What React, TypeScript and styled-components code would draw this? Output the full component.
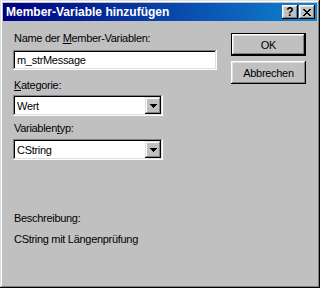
import React from "react";
import styled, { createGlobalStyle } from "styled-components";

const face = "#c0c0c0";
const font = `"Liberation Sans", Arial, sans-serif`;

const GlobalStyle = createGlobalStyle`
    html, body {
        margin: 0;
        padding: 0;
        background: ${face};
    }
    body {
        font-family: ${font};
        font-size: 11px;
        letter-spacing: -0.3px;
        color: #000;
    }
`;

const Window = styled.div`
    width: 320px;
    height: 288px;
    box-sizing: border-box;
    padding: 3px;
    background: ${face};
    box-shadow: inset -1px -1px #000, inset 1px 1px #dfdfdf,
        inset -2px -2px #808080, inset 2px 2px #fff;
    display: flex;
    flex-direction: column;
`;

const TitleBar = styled.div`
    height: 18px;
    display: flex;
    align-items: center;
    padding: 0 2px 0 3px;
    background: linear-gradient(to right, #000080, #1084d0);
    color: #fff;
    font-weight: bold;
    font-size: 12px;
    letter-spacing: 0;
`;

const TitleText = styled.div`
    flex: 1;
    white-space: nowrap;
`;

const TitleButtons = styled.div`
    display: flex;
    gap: 1px;
`;

const TitleButton = styled.div`
    width: 16px;
    height: 14px;
    box-sizing: border-box;
    background: ${face};
    box-shadow: inset -1px -1px #000, inset 1px 1px #fff,
        inset -2px -2px #808080, inset 2px 2px #dfdfdf;
    color: #000;
    display: flex;
    align-items: center;
    justify-content: center;
    font-size: 12px;
    font-weight: bold;
    line-height: 1;
`;

const Body = styled.div`
    flex: 1;
    display: flex;
    padding: 11px 11px 0 10px;
`;

const LeftColumn = styled.div`
    width: 204px;
    display: flex;
    flex-direction: column;
`;

const RightColumn = styled.div`
    margin-left: 14px;
    padding-top: 1px;
    display: flex;
    flex-direction: column;
    gap: 5px;
`;

const Label = styled.div<{ $top: number }>`
    margin-top: ${p => p.$top}px;
    line-height: 13px;
    padding-left: 1px;
    white-space: nowrap;
`;

const Sunken = styled.div<{ $width: number; $height: number; $top: number }>`
    width: ${p => p.$width}px;
    height: ${p => p.$height}px;
    margin-top: ${p => p.$top}px;
    box-sizing: border-box;
    background: #fff;
    box-shadow: inset -1px -1px #fff, inset 1px 1px #808080,
        inset -2px -2px #dfdfdf, inset 2px 2px #000;
    display: flex;
    align-items: center;
    padding: 2px 2px 2px 4px;
`;

const FieldText = styled.div`
    flex: 1;
    white-space: nowrap;
`;

const DropButton = styled.div`
    width: 16px;
    height: 17px;
    box-sizing: border-box;
    background: ${face};
    box-shadow: inset -1px -1px #000, inset 1px 1px #dfdfdf,
        inset -2px -2px #808080, inset 2px 2px #fff;
    display: flex;
    align-items: center;
    justify-content: center;
`;

const Button = styled.div<{ $default?: boolean }>`
    width: 75px;
    height: 23px;
    box-sizing: border-box;
    background: ${face};
    display: flex;
    align-items: center;
    justify-content: center;
    box-shadow: ${p =>
        p.$default
            ? "inset 0 0 0 1px #000, inset -2px -2px #000, inset 2px 2px #fff, inset -3px -3px #808080, inset 3px 3px #dfdfdf"
            : "inset -1px -1px #000, inset 1px 1px #fff, inset -2px -2px #808080, inset 2px 2px #dfdfdf"};
`;

const Arrow = () => (
    <svg width="7" height="4" viewBox="0 0 7 4" shapeRendering="crispEdges">
        <path d="M0 0h7v1H0zM1 1h5v1H1zM2 2h3v1H2zM3 3h1v1H3z" fill="#000" />
    </svg>
);

const CloseGlyph = () => (
    <svg width="8" height="7" viewBox="0 0 8 7" shapeRendering="crispEdges">
        <path
            d="M0 0h2v1H0zM6 0h2v1H6zM1 1h2v1H1zM5 1h2v1H5zM2 2h4v1H2zM3 3h2v1H3zM2 4h4v1H2zM1 5h2v1H1zM5 5h2v1H5zM0 6h2v1H0zM6 6h2v1H6z"
            fill="#000"
        />
    </svg>
);

const Combo = ({ value, top }: { value: string; top: number }) => (
    <Sunken $width={150} $height={21} $top={top}>
        <FieldText>{value}</FieldText>
        <DropButton>
            <Arrow />
        </DropButton>
    </Sunken>
);

export default function App() {
    return (
        <>
            <GlobalStyle />
            <Window>
                <TitleBar>
                    <TitleText>Member-Variable hinzufügen</TitleText>
                    <TitleButtons>
                        <TitleButton>?</TitleButton>
                        <TitleButton>
                            <CloseGlyph />
                        </TitleButton>
                    </TitleButtons>
                </TitleBar>
                <Body>
                    <LeftColumn>
                        <Label $top={0}>
                            Name der <u>M</u>ember-Variablen:
                        </Label>
                        <Sunken $width={204} $height={20} $top={5}>
                            <FieldText>m_strMessage</FieldText>
                        </Sunken>
                        <Label $top={9}>
                            <u>K</u>ategorie:
                        </Label>
                        <Combo value="Wert" top={3} />
                        <Label $top={6}>
                            Variablen<u>t</u>yp:
                        </Label>
                        <Combo value="CString" top={4} />
                        <Label $top={52}>Beschreibung:</Label>
                        <Label $top={8}>CString mit Längenprüfung</Label>
                    </LeftColumn>
                    <RightColumn>
                        <Button $default>OK</Button>
                        <Button>Abbrechen</Button>
                    </RightColumn>
                </Body>
            </Window>
        </>
    );
}
